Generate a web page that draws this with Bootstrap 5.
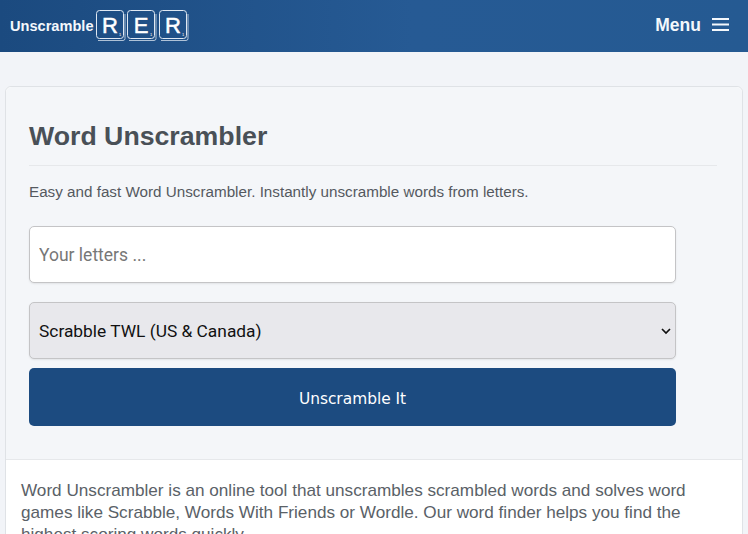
<!DOCTYPE html>
<html lang="en">
<head>
<meta charset="utf-8">
<meta name="viewport" content="width=device-width, initial-scale=1">
<title>Word Unscrambler</title>
<link href="https://cdn.jsdelivr.net/npm/bootstrap@5.3.0/dist/css/bootstrap.min.css" rel="stylesheet">
<style>
html, body { height: 534px; overflow: hidden; }
body { background: #f2f4f8; font-family: "Liberation Sans", Arial, sans-serif; color: #495057; }
.top-bar { height: 52px; padding: 0 19px 0 10px; background: linear-gradient(90deg, #1b4a7f 0%, #265a94 55%, #255a92 100%); color: #fff; }
.brand-word { font-size: 14.6px; font-weight: 700; line-height: 1; color: #f4f8fc; }
.logo-tiles { display: block; }
.logo-tiles text { font-family: "Liberation Sans", Arial, sans-serif; fill: #fff; }
.menu-word { font-size: 17.5px; font-weight: 700; color: #f4f8fc; line-height: 1; }
.menu-bars { margin: 0 0 3px 11px; display: block; }
.panel-shell { margin: 34px 5px 0 5px; border: 1px solid #dfe2e6; border-radius: 6px 6px 0 0; background: #fff; }
.hero-area { height: 373px; padding: 0 25px 0 23px; background: #f4f6f9; border-bottom: 1px solid #e6e8eb; border-radius: 6px 6px 0 0; }
.hero-title { margin: 0; padding: 34px 0 13px; font-size: 26.7px; line-height: 31px; font-weight: 700; color: #495057; border-bottom: 1px solid #e6e8eb; }
.hero-sub { margin: 16px 0 24px; font-size: 15.23px; line-height: 20px; color: #54595f; }
.word-field, .dict-field { width: 647px; height: 57px; border: 1px solid #c4c4c6; border-radius: 5px; padding: 0 9px; font-family: "Roboto", sans-serif; box-shadow: 0 1px 2px rgba(0,0,0,.08); }
.word-field { font-size: 17.5px; background: #fff; }
.word-field::placeholder { color: #777; opacity: 1; }
.dict-field { margin-top: 19px; padding-top: 2px; font-size: 17.35px; background-color: #e8e8ec; color: #111; background-image: url("data:image/svg+xml,%3csvg xmlns='http://www.w3.org/2000/svg' viewBox='0 0 10 8'%3e%3cpath fill='none' stroke='%23111' stroke-width='1.7' d='M1 2l4 4 4-4'/%3e%3c/svg%3e"); background-size: 10px 8px; background-position: right 4px center; }
.go-btn { display: block; width: 647px; height: 58px; margin-top: 9px; padding: 6px 0 0; border: 0; border-radius: 5px; background: #1c4b80; color: #fff; font-family: "DejaVu Sans", sans-serif; font-size: 15.4px; }
.go-btn:hover { background: #1c4b80; color: #fff; }
.intro-copy { margin: 0; padding: 19px 15px 0; font-size: 17.15px; line-height: 22px; color: #5a6167; }
</style>
</head>
<body>
<header class="navbar top-bar d-flex justify-content-between align-items-center flex-nowrap">
  <a class="d-flex align-items-center text-decoration-none" href="#">
    <span class="brand-word">Unscramble</span>
    <svg class="logo-tiles" width="95" height="32" viewBox="0 0 95 32" aria-hidden="true">
      <g fill="none" stroke="#dfe8f2" stroke-width="1">
        <rect x="2.5" y=".5" width="27" height="28" rx="3"/><path d="M4 30.5h25a2 2 0 0 0 2-2V4" stroke-opacity=".75"/>
        <rect x="33.5" y=".5" width="27" height="28" rx="3"/><path d="M35 30.5h25a2 2 0 0 0 2-2V4" stroke-opacity=".75"/>
        <rect x="65.5" y=".5" width="27" height="28" rx="3"/><path d="M67 30.5h25a2 2 0 0 0 2-2V4" stroke-opacity=".75"/>
      </g>
      <g font-size="22" text-anchor="middle" stroke="#fff" stroke-width=".5">
        <text x="16" y="22.5">R</text>
        <text x="47" y="22.5">E</text>
        <text x="79" y="22.5">R</text>
      </g>
      <text x="25" y="26" font-size="4">1</text>
      <text x="56" y="26" font-size="4">1</text>
      <text x="88" y="26" font-size="4">1</text>
    </svg>
  </a>
  <div class="d-flex align-items-center">
    <span class="menu-word">Menu</span>
    <svg class="menu-bars" width="17" height="13" viewBox="0 0 17 13" aria-hidden="true"><path d="M0 1h17M0 6.5h17M0 12h17" stroke="#f4f8fc" stroke-width="1.8"/></svg>
  </div>
</header>
<main class="panel-shell">
  <section class="hero-area">
    <h1 class="hero-title">Word Unscrambler</h1>
    <p class="hero-sub">Easy and fast Word Unscrambler. Instantly unscramble words from letters.</p>
    <form>
      <input class="form-control word-field" type="text" placeholder="Your letters ...">
      <select class="form-select dict-field"><option>Scrabble TWL (US &amp; Canada)</option></select>
      <button class="btn go-btn" type="button">Unscramble It</button>
    </form>
  </section>
  <p class="intro-copy">Word Unscrambler is an online tool that unscrambles scrambled words and solves word games like Scrabble, Words With Friends or Wordle. Our word finder helps you find the highest scoring words quickly.</p>
</main>
<script src="https://cdn.jsdelivr.net/npm/bootstrap@5.3.0/dist/js/bootstrap.bundle.min.js"></script>
</body>
</html>
